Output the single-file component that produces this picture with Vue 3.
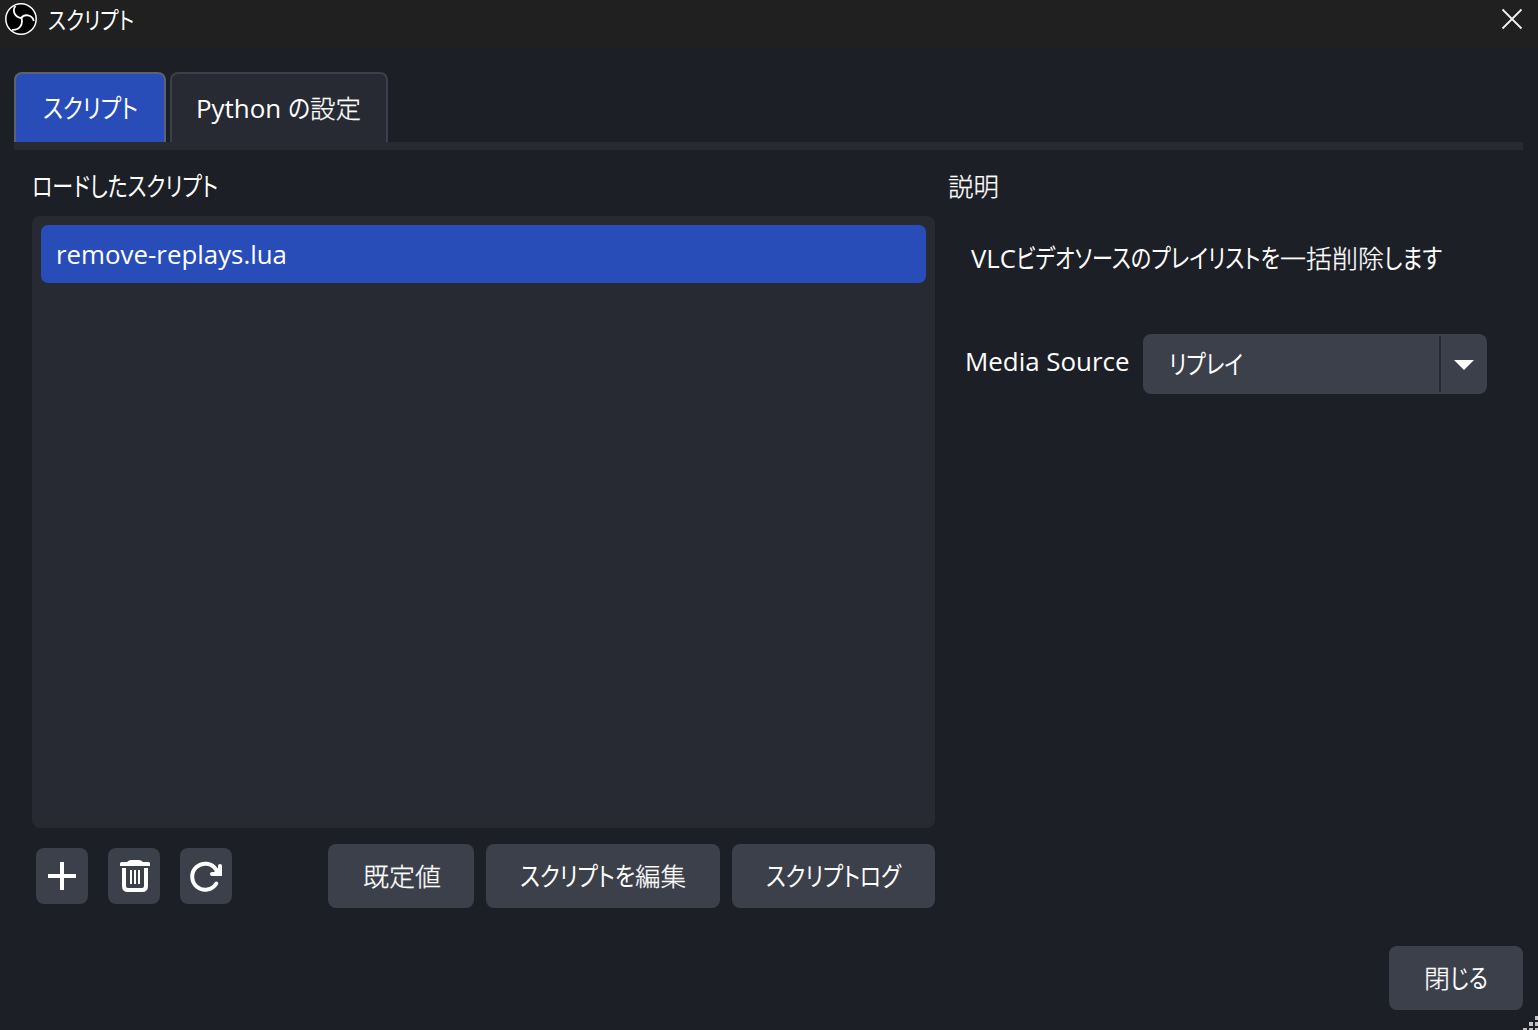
<script setup>
import { ref } from 'vue'

// Squeezes or stretches a run of text so that it occupies exactly `value` pixels.
const vFit = {
  mounted(el, { value }) {
    const inner = el.firstElementChild
    const natural = inner.getBoundingClientRect().width
    el.style.width = `${value}px`
    inner.style.transform = `scaleX(${value / natural})`
  },
}

// Ideographs are set lighter than kana and Latin.
const isKanji = (text) => /^[\u4e00-\u9fff]+$/.test(text)

const tabs = [
  { id: 'scripts', runs: [['スクリプト', 95]] },
  { id: 'python', runs: [['Python ', 92], ['の', 22], ['設定', 51]] },
]
const activeTab = ref('scripts')

const description = [
  ['VLC', 45],
  ['ビデオソースのプレイリストを', 264],
  ['一括削除', 104],
  ['します', 58],
]

const actions = [
  { id: 'defaults', width: 146, runs: [['既定値', 78]] },
  { id: 'edit', width: 234, runs: [['スクリプトを', 115], ['編集', 51]] },
  { id: 'log', width: 203, runs: [['スクリプトログ', 135]] },
]
</script>

<template>
  <div class="window">
    <header class="titlebar">
      <svg class="logo" width="34" height="34" viewBox="0 0 34 34" fill="none" stroke="#fff">
        <circle cx="17" cy="17" r="15.200" fill="#000" stroke-width="1.500" />
        <path d="M11.500 4C8 8.500 10.500 15 17.300 16" stroke-width="1.800" />
        <path d="M17.300 16C20 12 28 12 29.800 19" stroke-width="1.800" />
        <path d="M17.300 15.500C19.500 22 16 28.300 8 27.800" stroke-width="1.800" />
      </svg>
      <span class="title"><span v-fit="86" class="run"><span>スクリプト</span></span></span>
      <svg class="close" width="22" height="22" viewBox="0 0 22 22">
        <path d="M1.500 1.500L20.500 20.500M20.500 1.500L1.500 20.500" stroke="#f2f2f2" stroke-width="1.800" />
      </svg>
    </header>

    <nav class="tabs">
      <button
        v-for="tab in tabs"
        :key="tab.id"
        class="tab"
        :class="[tab.id, { active: tab.id === activeTab }]"
        @click="activeTab = tab.id"
      >
        <span v-for="[text, w] in tab.runs" :key="text" v-fit="w" class="run" :class="{ kanji: isKanji(text) }"><span>{{ text }}</span></span>
      </button>
    </nav>

    <main class="body">
      <section class="left">
        <h2 class="heading"><span v-fit="186" class="run"><span>ロードしたスクリプト</span></span></h2>
        <div class="list">
          <div class="item"><span v-fit="231" class="run"><span>remove-replays.lua</span></span></div>
        </div>
        <div class="toolbar">
          <button class="icon">
            <svg width="52" height="56" viewBox="0 0 52 56"><path d="M12 28H40M26 14V42" stroke="#fff" stroke-width="4" /></svg>
          </button>
          <button class="icon">
            <svg width="52" height="56" viewBox="0 0 52 56" fill="none" stroke="#fff">
              <path d="M12 18V15.500Q12 14 13.500 14H19Q21 12 23 12H31Q33 12 35 14H40.500Q42 14 42 15.500V18Z" fill="#fff" stroke="none" />
              <path d="M16 20V38Q16 42 20 42H34Q38 42 38 38V20" stroke-width="4" />
              <path d="M23 22V36M27 22V36M31 22V36" stroke-width="2" />
            </svg>
          </button>
          <button class="icon">
            <svg width="52" height="56" viewBox="0 0 52 56" fill="none" stroke="#fff" stroke-width="4">
              <path d="M36.300 35.500A13 13 0 1 1 36 21.500L39 25" stroke-linecap="round" />
              <path d="M40 18V26H32" stroke-linecap="round" />
              <path d="M34 28V24L38 20H42V28Z" fill="#fff" stroke="none" />
            </svg>
          </button>
          <div class="actions">
            <button v-for="a in actions" :key="a.id" class="btn" :style="{ width: a.width + 'px' }">
              <span v-for="[text, w] in a.runs" :key="text" v-fit="w" class="run" :class="{ kanji: isKanji(text) }"><span>{{ text }}</span></span>
            </button>
          </div>
        </div>
      </section>

      <section class="right">
        <h2 class="heading"><span v-fit="51" class="run kanji"><span>説明</span></span></h2>
        <p class="description">
          <span v-for="[text, w] in description" :key="text" v-fit="w" class="run" :class="{ kanji: isKanji(text) }"><span>{{ text }}</span></span>
        </p>
        <div class="property">
          <label><span v-fit="164.5" class="run"><span>Media Source</span></span></label>
          <div class="select">
            <span class="value"><span v-fit="74" class="run"><span>リプレイ</span></span></span>
            <span class="arrow">
              <svg width="20" height="10" viewBox="0 0 20 10"><path d="M0 0H20L10 10Z" fill="#fff" /></svg>
            </span>
          </div>
        </div>
      </section>
    </main>

    <footer class="footer">
      <button class="btn close-btn">
        <span v-fit="26" class="run kanji"><span>閉</span></span><span v-fit="38" class="run"><span>じる</span></span>
      </button>
    </footer>

    <svg class="grip" width="15" height="14" viewBox="0 0 15 14" fill="#c4c4c4">
      <path d="M12 0h4v4h-4zM6 6h4v4h-4zM12 6h4v4h-4zM0 12h4v4h-4zM6 12h4v4h-4zM12 12h4v4h-4z" />
    </svg>
  </div>
</template>

<style>
body {
  margin: 0;
  background: #1d1f26;
}
</style>

<style scoped>
.window {
  position: relative;
  box-sizing: border-box;
  width: 1538px;
  height: 1030px;
  overflow: hidden;
  display: flex;
  flex-direction: column;
  background: #1d1f26;
  color: #fff;
  font-family: "Open Sans", "Noto Sans CJK JP", sans-serif;
  font-size: 26px;
  line-height: 36px;
  font-feature-settings: "palt";
}
button {
  padding: 0;
  border: 0;
  color: inherit;
  font: inherit;
  font-feature-settings: inherit;
}
.run {
  display: inline-block;
  white-space: pre;
}
.run > span {
  display: inline-block;
  transform-origin: 0 50%;
}
.kanji {
  font-size: 25px;
  font-weight: 300;
  -webkit-text-stroke: 0.25px #fff;
}
.titlebar {
  flex: none;
  height: 48px;
  display: flex;
  align-items: flex-start;
  background: #202020;
}
.logo {
  margin: 2px 0 0 4px;
}
.title {
  margin: 2px 0 0 10px;
  font-size: 24px;
}
.close {
  margin: 8px 15px 0 auto;
}
.tabs {
  flex: none;
  display: flex;
  align-items: flex-end;
  gap: 4px;
  height: 94px;
  margin: 0 15px 0 14px;
  border-bottom: 8px solid #272a33;
}
.tab {
  box-sizing: border-box;
  height: 70px;
  display: flex;
  align-items: center;
  justify-content: center;
  border: 2px solid #3c404d;
  border-bottom: 0;
  border-radius: 8px 8px 0 0;
  background: #272a33;
}
.tab.scripts {
  width: 152px;
}
.tab.python {
  width: 218px;
  padding-right: 1px;
}
.tab.active {
  border-color: #5b6273;
  background: #284cb8;
}
.body {
  flex: none;
  display: flex;
  height: 758px;
}
.heading {
  height: 36px;
  margin: 0;
  font-size: inherit;
  font-weight: 400;
}
.left {
  width: 903px;
  margin-left: 32px;
  padding-top: 18px;
}
.list {
  box-sizing: border-box;
  height: 612px;
  margin-top: 12px;
  padding: 9px;
  border-radius: 8px;
  background: #272a33;
}
.item {
  box-sizing: border-box;
  height: 58px;
  padding: 11px 15px;
  border-radius: 7px;
  background: #284cb8;
}
.toolbar {
  display: flex;
  align-items: center;
  gap: 20px;
  margin-top: 16px;
  padding-left: 4px;
}
.icon {
  width: 52px;
  height: 56px;
  border-radius: 8px;
  background: #3c404b;
}
.icon svg {
  display: block;
}
.actions {
  display: flex;
  gap: 12px;
  margin-left: auto;
}
.btn {
  height: 64px;
  display: flex;
  align-items: center;
  justify-content: center;
  border-radius: 8px;
  background: #3c404b;
}
.right {
  flex: 1;
  margin-left: 13px;
  padding-top: 18px;
}
.description {
  display: flex;
  margin: 36px 0 0 23px;
}
.property {
  display: flex;
  align-items: flex-start;
  margin: 58px 0 0 17px;
}
.property label {
  width: 178px;
  margin-top: 9px;
}
.select {
  display: flex;
  width: 344px;
  height: 60px;
  border-radius: 8px;
  background: #3c404b;
}
.value {
  flex: 1;
  padding: 12px 0 0 26px;
}
.arrow {
  box-sizing: border-box;
  display: flex;
  align-items: center;
  justify-content: center;
  width: 48px;
  height: 56px;
  margin-top: 2px;
  padding-top: 2px;
  border-left: 2px solid #272a33;
}
.footer {
  flex: none;
  display: flex;
  justify-content: flex-end;
  margin: 38px 15px 0 0;
}
.close-btn {
  width: 134px;
}
.grip {
  position: absolute;
  right: 0;
  bottom: 0;
}
</style>
